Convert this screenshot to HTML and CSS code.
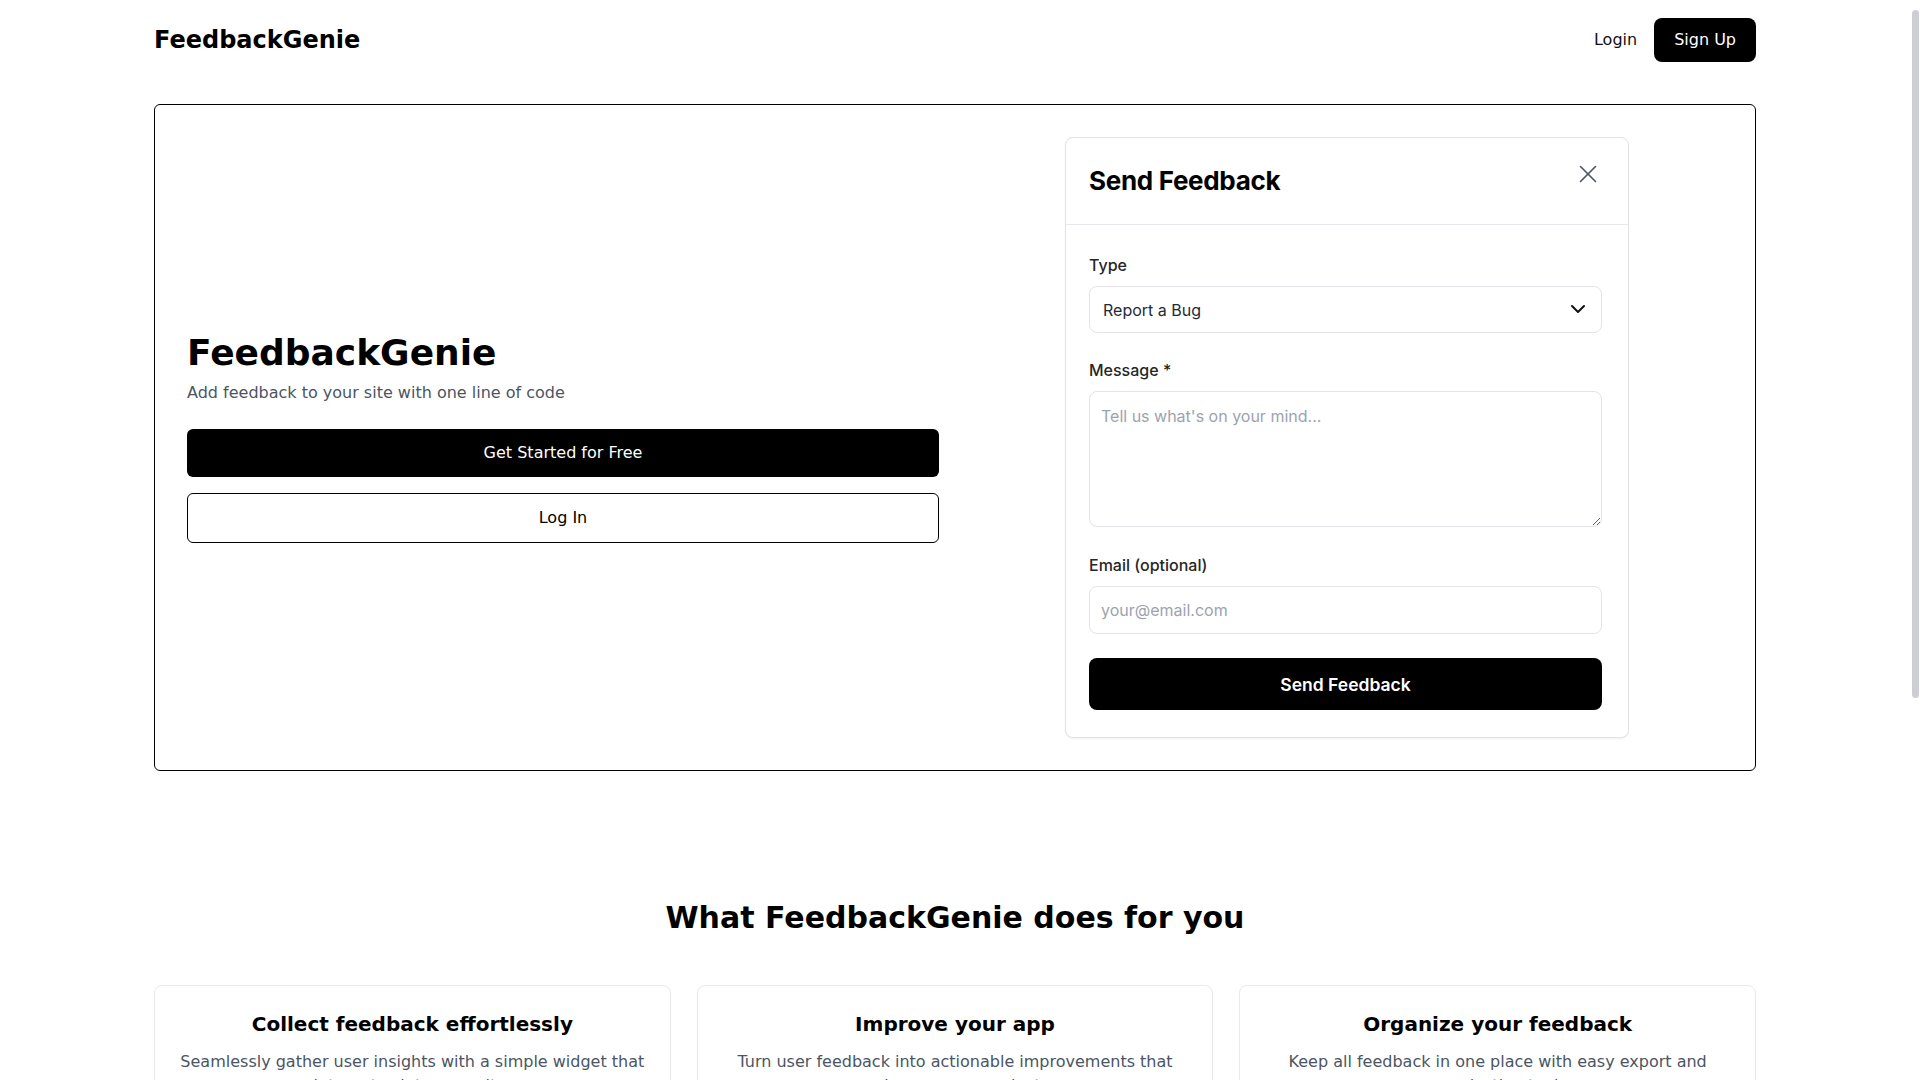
FILE: index.html
```html
<!DOCTYPE html>
<html lang="en">
<head>
<meta charset="utf-8">
<title>FeedbackGenie</title>
<link rel="stylesheet" href="styles.css">
</head>
<body>
<header class="site-header">
  <div class="container header-inner">
    <a class="logo" href="#">FeedbackGenie</a>
    <nav class="nav">
      <a class="nav-login" href="#">Login</a>
      <a class="btn-signup" href="#">Sign Up</a>
    </nav>
  </div>
</header>

<main class="container">
  <section class="hero">
    <div class="hero-left">
      <h1 class="hero-title">FeedbackGenie</h1>
      <p class="hero-sub">Add feedback to your site with one line of code</p>
      <a class="btn btn-primary" href="#">Get Started for Free</a>
      <a class="btn btn-outline" href="#">Log In</a>
    </div>
    <div class="hero-right">
      <div class="widget">
        <div class="widget-header">
          <h2 class="widget-title">Send Feedback</h2>
          <button class="close-btn" type="button" aria-label="Close">
            <svg width="20" height="20" viewBox="0 0 20 20" fill="none" stroke="currentColor" stroke-width="1.6" stroke-linecap="round"><path d="M2.5 2.5 17.5 17.5"/><path d="M17.5 2.5 2.5 17.5"/></svg>
          </button>
        </div>
        <form class="widget-body">
          <div class="field field-first">
            <label class="field-label" for="type">Type</label>
            <div class="select-wrap">
              <select id="type" class="control select">
                <option>Report a Bug</option>
                <option>Feature Request</option>
                <option>Other</option>
              </select>
              <svg class="chevron" width="24" height="24" viewBox="0 0 24 24" fill="none" stroke="currentColor" stroke-width="2" stroke-linecap="round" stroke-linejoin="round"><path d="m6 9 6 6 6-6"/></svg>
            </div>
          </div>
          <div class="field">
            <label class="field-label" for="msg">Message *</label>
            <textarea id="msg" class="control textarea" placeholder="Tell us what's on your mind..."></textarea>
          </div>
          <div class="field field-last">
            <label class="field-label" for="email">Email (optional)</label>
            <input id="email" class="control input" type="email" placeholder="your@email.com">
          </div>
          <button class="submit" type="button">Send Feedback</button>
        </form>
      </div>
    </div>
  </section>

  <section class="features">
    <h2 class="features-title">What FeedbackGenie does for you</h2>
    <div class="cards">
      <div class="card">
        <h3 class="card-title">Collect feedback effortlessly</h3>
        <p class="card-text">Seamlessly gather user insights with a simple widget that integrates into your site.</p>
      </div>
      <div class="card">
        <h3 class="card-title">Improve your app</h3>
        <p class="card-text">Turn user feedback into actionable improvements that enhance your product.</p>
      </div>
      <div class="card">
        <h3 class="card-title">Organize your feedback</h3>
        <p class="card-text">Keep all feedback in one place with easy export and organization tools.</p>
      </div>
    </div>
  </section>
</main>

<div class="scroll-thumb" aria-hidden="true"></div>
</body>
</html>
```

FILE: styles.css
```css
* { box-sizing: border-box; }

body {
  margin: 0;
  padding-right: 10px;
  background: #ffffff;
  color: #000000;
  font-family: "DejaVu Sans", sans-serif;
  font-size: 16px;
  line-height: 24px;
}

a { color: inherit; text-decoration: none; }

.container {
  max-width: 1602px;
  margin: 0 auto;
}

/* imitation of the browser scrollbar thumb seen in the reference */
.scroll-thumb {
  position: fixed;
  top: 10px;
  right: 1px;
  width: 7px;
  height: 688px;
  border-radius: 4px;
  background: #cdced4;
}

/* Header */
.header-inner {
  display: flex;
  justify-content: space-between;
  align-items: center;
  padding: 18px 0;
}

.logo {
  font-size: 24px;
  line-height: 32px;
  font-weight: 700;
  color: #000;
}

.nav {
  display: flex;
  align-items: center;
  gap: 17px;
}

.nav-login {
  font-size: 16px;
  color: #111;
}

.btn-signup {
  display: block;
  background: #000;
  color: #fff;
  padding: 10px 20px;
  border-radius: 8px;
  font-size: 16px;
  line-height: 24px;
}

/* Hero */
.hero {
  margin-top: 24px;
  border: 1px solid #000;
  border-radius: 6px;
  padding: 32px;
  display: grid;
  grid-template-columns: 1fr 1fr;
  gap: 32px;
  align-items: center;
}

.hero-left {
  display: flex;
  flex-direction: column;
}

.hero-title {
  margin: 0 0 8px;
  font-size: 36px;
  line-height: 40px;
  font-weight: 700;
}

.hero-sub {
  margin: 0 0 24px;
  color: #4b5563;
  font-size: 16px;
  line-height: 24px;
}

.btn {
  display: block;
  text-align: center;
  font-size: 16px;
  line-height: 24px;
  border-radius: 6px;
}

.btn-primary {
  background: #000;
  color: #fff;
  padding: 12px;
  margin-bottom: 16px;
}

.btn-outline {
  border: 1px solid #000;
  color: #000;
  padding: 12px;
}

.hero-right {
  display: flex;
  justify-content: center;
}

/* Widget */
.widget {
  width: 564px;
  border: 1px solid #e2e2e7;
  border-radius: 8px;
  background: #fff;
  box-shadow: 0 1px 2px rgba(0, 0, 0, 0.06);
  font-family: Inter, "Liberation Sans", sans-serif;
}

.widget-header {
  display: flex;
  justify-content: space-between;
  align-items: flex-start;
  padding: 27px 26px 27px 23px;
  border-bottom: 1px solid #e8e8ec;
}

.widget-title {
  margin: 0;
  font-size: 26px;
  line-height: 32px;
  font-weight: 700;
  letter-spacing: -0.012em;
  color: #000;
}

.close-btn {
  margin-top: -5px;
  width: 28px;
  height: 28px;
  padding: 4px;
  border: 0;
  background: none;
  color: #4b5563;
  display: flex;
  align-items: center;
  justify-content: center;
  cursor: pointer;
}

.widget-body {
  margin: 0;
  padding: 30px 26px 27px 23px;
  display: flex;
  flex-direction: column;
}

.field {
  display: flex;
  flex-direction: column;
  margin-bottom: 28px;
}

.field-first {
  margin-bottom: 27px;
}

.field-last {
  margin-bottom: 24px;
}

.field-label {
  font-size: 16px;
  line-height: 20px;
  font-weight: 500;
  color: #262626;
  margin-bottom: 11px;
}

.control {
  width: 100%;
  border: 1px solid #e3e3e8;
  border-radius: 8px;
  background: #fff;
  font-family: Inter, "Liberation Sans", sans-serif;
  font-size: 16px;
  line-height: 24px;
  color: #1f2937;
  outline: none;
}

.control::placeholder {
  color: #9ca3af;
}

.select-wrap {
  position: relative;
}

.select {
  height: 47px;
  padding: 0 40px 0 13px;
  appearance: none;
  -webkit-appearance: none;
}

.chevron {
  position: absolute;
  right: 12px;
  top: 11px;
  color: #111;
  pointer-events: none;
}

.textarea {
  height: 136px;
  padding: 12px 11px;
  resize: vertical;
  display: block;
}

.input {
  height: 48px;
  padding: 0 11px;
}

.submit {
  height: 52px;
  width: 100%;
  border: 0;
  border-radius: 8px;
  background: #000;
  color: #fff;
  font-family: Inter, "Liberation Sans", sans-serif;
  font-size: 17.5px;
  font-weight: 600;
  cursor: pointer;
}

/* Features */
.features {
  margin-top: 129px;
  padding-bottom: 64px;
}

.features-title {
  margin: 0 0 49px;
  text-align: center;
  font-size: 30px;
  line-height: 36px;
  font-weight: 700;
}

.cards {
  display: grid;
  grid-template-columns: repeat(3, 1fr);
  gap: 26px;
}

.card {
  border: 1px solid #e9e9ec;
  border-radius: 8px;
  padding: 24px;
  text-align: center;
}

.card-title {
  margin: 0 0 12px;
  font-size: 20px;
  line-height: 28px;
  font-weight: 700;
}

.card-text {
  margin: 0;
  font-size: 16px;
  line-height: 24px;
  color: #4b5563;
}
```
